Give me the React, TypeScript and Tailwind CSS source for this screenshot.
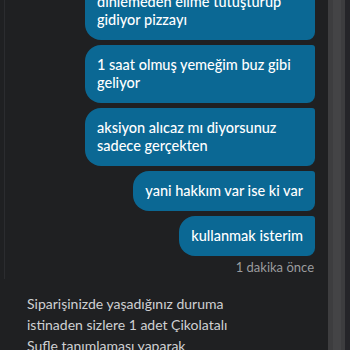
import React from "react";

const font = { fontFamily: "Lato, 'Noto Sans', sans-serif" };

function Bubble({ lines, wide }: { lines: string[]; wide?: boolean }) {
  return (
    <div
      className={`${wide ? "w-[230px]" : "w-fit"} bg-[#0b6894] text-white text-[14.5px] leading-[18px] font-medium px-3 py-[11px] rounded-l-2xl rounded-tr-[3px] rounded-br-lg`}
    >
      {lines.map((l, i) => (
        <div key={i} className="whitespace-nowrap">{l}</div>
      ))}
    </div>
  );
}

export default function App() {
  return (
    <div className="w-[350px] h-[350px] overflow-hidden bg-[#1f2022] flex" style={font}>
      <div className="flex-1 flex flex-col">
        <div className="ml-[4px] border-l border-[#2b2c2f] pr-[13px] flex flex-col items-end gap-[5px] mt-[-18px] pb-[4px]">
          <Bubble wide lines={["dinlemeden elime tutuşturup", "gidiyor pizzayı"]} />
          <Bubble wide lines={["1 saat olmuş yemeğim buz gibi", "geliyor"]} />
          <Bubble wide lines={["aksiyon alıcaz mı diyorsunuz", "sadece gerçekten"]} />
          <Bubble lines={["yani hakkım var ise ki var"]} />
          <Bubble lines={["kullanmak isterim"]} />
          <div className="text-[13px] leading-[16px] text-[#9b9c9f] mt-[-2px] pr-[1px]">1 dakika önce</div>
        </div>
        <div className="pl-[27px] pt-[14px] text-[14px] leading-[21px] text-[#cfd0d2]">
          <div>Siparişinizde yaşadığınız duruma</div>
          <div>istinaden sizlere 1 adet Çikolatalı</div>
          <div>Sufle tanımlaması yaparak</div>
        </div>
      </div>
      <div className="w-[22px] flex">
        <div className="w-[17px] bg-[#3d3d3f] flex justify-center">
          <div className="w-[8px] bg-[#444446]" />
        </div>
        <div className="flex-1 bg-[#252529]" />
      </div>
    </div>
  );
}
